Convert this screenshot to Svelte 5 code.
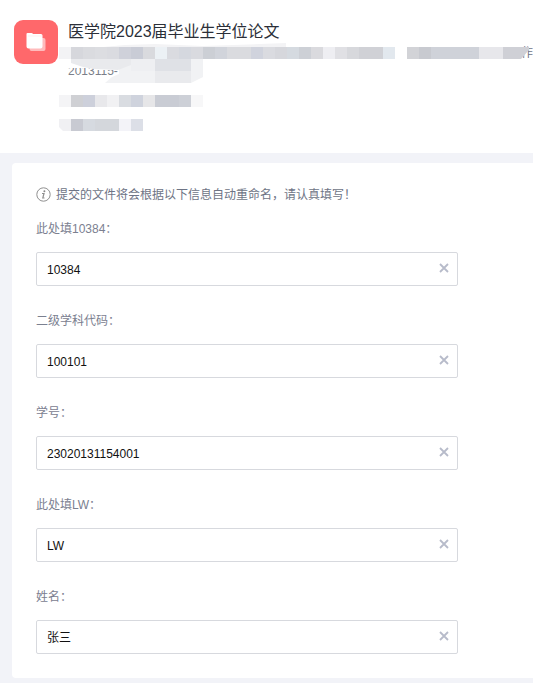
<script lang="ts">
	type Tile = [x: number, width: number, color: string];

	const maskRows: { y: number; tiles: Tile[] }[] = [
		{
			y: 47,
			tiles: [
				[59, 12, '#f3f3f5'], [71, 12, '#d6d7dc'], [83, 12, '#dadbdf'], [95, 12, '#dcdde1'],
				[107, 12, '#dadbe0'], [119, 12, '#cfd1da'], [131, 12, '#c9ccd6'], [143, 12, '#d9dade'],
				[155, 12, '#ecf1f5'], [167, 12, '#dadbe0'], [179, 12, '#d5d8df'], [191, 12, '#d9dadf'],
				[203, 12, '#cccfd5'], [215, 12, '#d1d4db'], [227, 24, '#dadbdf'], [251, 12, '#d0d3dd'],
				[263, 12, '#dadbe0'], [275, 12, '#d6d7dc'], [287, 12, '#d5dae0'], [299, 12, '#cdd0d6'],
				[311, 12, '#dadade'], [323, 12, '#eeeef2'], [335, 12, '#e0e0e4'], [347, 12, '#d7d8dc'],
				[359, 24, '#d0d1d6'], [383, 12, '#e2e8ee'], [407, 12, '#d2d3d7'], [419, 12, '#c8cad0'],
				[431, 48, '#cfd2d9'], [479, 24, '#e7e7eb']
			]
		},
		{
			y: 95,
			tiles: [
				[59, 12, '#f4f4f6'], [71, 12, '#cfd0d4'], [83, 12, '#cdd0db'], [95, 12, '#e8e8eb'],
				[107, 12, '#f1f1f3'], [119, 12, '#d9dce1'], [131, 12, '#cfd3dd'], [143, 12, '#e6e6e8'],
				[155, 24, '#c9ccd4'], [179, 12, '#cdd0d7'], [191, 12, '#f7f7f8']
			]
		},
		{
			y: 119,
			tiles: [
				[71, 12, '#c8cad2'], [83, 12, '#d6dae0'], [95, 24, '#d4d7dc'],
				[119, 12, '#f3f3f8'], [131, 12, '#dcdfe7']
			]
		}
	];

	let fields = $state([
		{ label: '此处填10384：', value: '10384' },
		{ label: '二级学科代码：', value: '100101' },
		{ label: '学号：', value: '23020131154001' },
		{ label: '此处填LW：', value: 'LW' },
		{ label: '姓名：', value: '张三' }
	]);

	// Han glyphs sit lower in the line box than digits do
	const isHan = (text: string) => /^\p{Script=Han}/u.test(text);
</script>

<div class="page">
	<header class="header">
		<div class="logo">
			<svg width="22" height="20" viewBox="0 0 22 20">
				<path d="M6 6h12.500q2 0 2 2v9q0 2-2 2H6.500q-2 0-2-2z" fill="#fff" opacity=".55" />
				<path d="M2.500 1h4q1 0 1.500 1h8q1.500 0 1.500 1.500v11q0 2-2 2H3.500q-2 0-2-2V2q0-1 1-1z" fill="#fff" />
				<path d="M3 4h14" stroke="#fee4e5" stroke-width=".6" />
			</svg>
		</div>
		<div class="heading">
			<h1>医学院2023届毕业生学位论文</h1>
			<div class="detail"><span>作</span></div>
			<div class="date">2013115-</div>
		</div>
		<svg class="mask" width="533" height="153" viewBox="0 0 533 153">
			<path d="M103 47L125 45L155 44L203 46L260 44L286 43V47z" fill="#f3f3f5" />
			<path d="M66 59H131V70H114L94 70V68H66z" fill="#fff" />
			<path d="M119 59H203V77L191 83H105L112 77L119 74z" fill="#f1f2f4" />
			<path d="M71 59h60v6l-13 5L94 69L83 67L71 63z" fill="#e9eaed" />
			<path d="M131 59h24v12h-24z" fill="#eeeff2" />
			<path d="M155 59h36v12h-36z" fill="#dfe1e6" />
			<path d="M155 71h36v12h-36z" fill="#e9eaed" />
			<path d="M503 47H529V50L521 59H503z" fill="#cfd0d6" />
			<path d="M59 119H71V131H63L59 127z" fill="#f0f0f3" />
			{#each maskRows as row}
				{#each row.tiles as [x, width, color]}
					<rect {x} y={row.y} {width} height="12" fill={color} shape-rendering="crispEdges" />
				{/each}
			{/each}
		</svg>
	</header>

	<main class="card">
		<div class="notice">
			<svg width="15" height="15" viewBox="0 0 15 15" fill="none" stroke="#8f8f8f">
				<circle cx="7.500" cy="7.500" r="6.700" />
				<circle cx="8.400" cy="4.200" r="1" fill="#888" stroke="none" />
				<path d="M6 6.500h2L6.800 11h1.700" stroke-width="1.200" />
			</svg>
			<span>提交的文件将会根据以下信息自动重命名，请认真填写！</span>
		</div>
		{#each fields as field}
			<label class="field">
				<span class="label">{field.label}</span>
				<span class="control">
					<input type="text" class:han={isHan(field.value)} bind:value={field.value} />
					<button type="button" aria-label="clear" onclick={() => (field.value = '')}>
						<svg width="10" height="10" viewBox="0 0 10 10">
							<path d="M1 1l8 8M9 1l-8 8" stroke="#b7bbca" stroke-width="1.800" />
						</svg>
					</button>
				</span>
			</label>
		{/each}
	</main>
</div>

<style>
	:global(body) {
		background: #f2f3f8;
	}

	.page {
		height: 683px;
		overflow: hidden;
		box-sizing: border-box;
		background: #f2f3f8;
		font-family: 'Liberation Sans', 'Noto Sans CJK SC', sans-serif;
		font-size: 12px;
		color: #6e7485;
	}

	.header {
		position: relative;
		display: flex;
		gap: 10px;
		height: 153px;
		box-sizing: border-box;
		padding: 20px 0 0 14px;
		background: #fff;
	}

	.logo {
		display: flex;
		align-items: center;
		justify-content: center;
		flex: none;
		width: 44px;
		height: 44px;
		border-radius: 9px;
		background: #ff686b;
	}

	.heading {
		flex: 1;
	}

	h1 {
		margin: 0;
		font-size: 16px;
		font-weight: 400;
		line-height: 24px;
		color: #2b2f38;
	}

	.detail {
		display: flex;
		justify-content: flex-end;
		line-height: 18px;
	}

	.date {
		line-height: 18px;
		color: #7b7f8a;
	}

	.mask {
		position: absolute;
		top: 0;
		left: 0;
	}

	.card {
		height: 515px;
		box-sizing: border-box;
		margin: 10px 0 0 12px;
		padding: 22px 24px 0;
		border-radius: 4px 0 0 4px;
		background: #fff;
	}

	.notice {
		display: flex;
		align-items: center;
		gap: 5px;
		height: 18px;
		margin-bottom: 17px;
		line-height: 18px;
	}

	.notice span {
		padding-top: 2px;
	}

	.field {
		display: block;
		height: 92px;
	}

	.label {
		display: block;
		height: 18px;
		margin-bottom: 14px;
		line-height: 18px;
		color: #7b8090;
	}

	.control {
		display: flex;
		align-items: center;
		width: 422px;
		height: 34px;
		box-sizing: border-box;
		border: 1px solid #d7d9de;
		border-radius: 2px;
	}

	input {
		flex: 1;
		min-width: 0;
		padding: 2px 0 0 10px;
		border: 0;
		outline: none;
		background: none;
		font: inherit;
		color: #111;
	}

	.han {
		padding: 0 0 1px 10px;
	}

	button {
		display: flex;
		padding: 0 8px 2px;
		border: 0;
		background: none;
		cursor: pointer;
	}
</style>
